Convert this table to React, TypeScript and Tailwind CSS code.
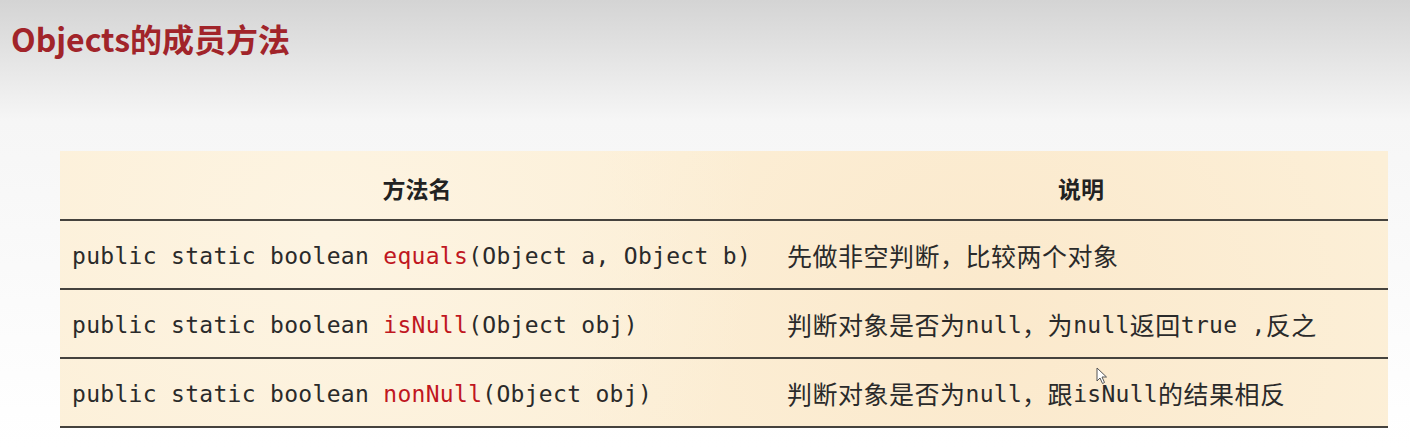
import React from "react";

type Part = { t: string; mono?: boolean };

const rows: { pre: string; name: string; args: string; desc: Part[] }[] = [
  {
    pre: "public static boolean ",
    name: "equals",
    args: "(Object a, Object b)",
    desc: [{ t: "先做非空判断，比较两个对象" }],
  },
  {
    pre: "public static boolean ",
    name: "isNull",
    args: "(Object obj)",
    desc: [
      { t: "判断对象是否为" },
      { t: "null", mono: true },
      { t: "，为" },
      { t: "null", mono: true },
      { t: "返回" },
      { t: "true ,", mono: true },
      { t: "反之" },
    ],
  },
  {
    pre: "public static boolean ",
    name: "nonNull",
    args: "(Object obj)",
    desc: [
      { t: "判断对象是否为" },
      { t: "null", mono: true },
      { t: "，跟" },
      { t: "isNull", mono: true },
      { t: "的结果相反" },
    ],
  },
];

export default function App() {
  return (
    <div className="w-[1410px] h-[447px] overflow-hidden bg-linear-to-b from-[#d4d4d4] via-[#f6f6f6] via-[27%] to-white">
      <h1 className="pl-[11px] pt-[17px] text-[32px] leading-[42px] font-bold text-[#a1242a] font-['Noto_Sans_CJK_SC',sans-serif]">
        Objects的成员方法
      </h1>

      <div className="relative mt-[92px] ml-[60px] w-[1328px] bg-[#fcefd7] bg-[radial-gradient(circle_at_20%_30%,#fdf4e2_0,transparent_40%),radial-gradient(circle_at_70%_60%,#fbe9cc_0,transparent_45%)]">
        {/* header */}
        <div className="flex h-[70px] border-b-2 border-[#45423d] font-['Noto_Sans_CJK_SC',sans-serif] font-bold text-[23px] text-[#222]">
          <div className="w-[714px] flex items-center justify-center pt-[6px]">方法名</div>
          <div className="flex-1 flex items-center justify-center pt-[6px]">说明</div>
        </div>

        {rows.map((r) => (
          <div key={r.name} className="flex h-[69px] border-b-2 border-[#45423d] text-[#2a2a2a]">
            <div className="w-[714px] flex items-center pl-[12px] pt-[3px] font-['DejaVu_Sans_Mono',monospace] text-[23px] tracking-[0.3px] whitespace-pre">
              <span>{r.pre}</span>
              <span className="text-[#c0171f]">{r.name}</span>
              <span>{r.args}</span>
            </div>
            <div className="flex-1 flex items-center pl-[13px] pt-[3px] whitespace-pre">
              {r.desc.map((p, i) =>
                p.mono ? (
                  <span key={i} className="font-['DejaVu_Sans_Mono',monospace] text-[23px] tracking-[0.3px]">
                    {p.t}
                  </span>
                ) : (
                  <span key={i} className="font-['Noto_Sans_CJK_SC',sans-serif] text-[25px] tracking-[0.5px]">
                    {p.t}
                  </span>
                )
              )}
            </div>
          </div>
        ))}

        {/* mouse pointer */}
        <svg className="absolute left-[1036px] top-[216px] w-[12px] h-[18px]" viewBox="0 0 12 18">
          <path d="M1 1 L1 14 L4 11 L6.5 16.5 L8.5 15.5 L6 10 L10.5 10 Z" fill="#fff" stroke="#555" strokeWidth="1" strokeLinejoin="round" />
        </svg>
      </div>
    </div>
  );
}
